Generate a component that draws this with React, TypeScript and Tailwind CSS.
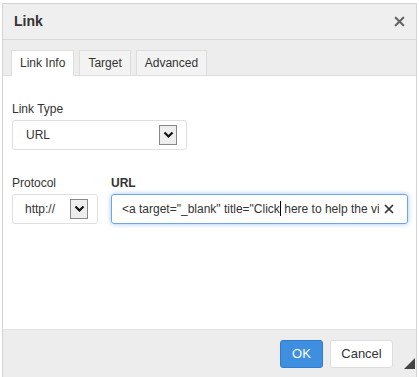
import { X } from 'lucide-react'

function Chevron() {
  return (
    <span className="w-[18px] h-[20px] border border-[#888] bg-[#eee] flex items-center justify-center">
      <svg width="11" height="8" viewBox="0 0 11 8">
        <path d="M1.5 1.5 L5.5 5.5 L9.5 1.5" fill="none" stroke="#111" strokeWidth="2.2" />
      </svg>
    </span>
  )
}

export default function App() {
  return (
    <div className="w-[419px] h-[377px] bg-white overflow-hidden" style={{ fontFamily: '"Liberation Sans", Arial, sans-serif' }}>
      <div className="ml-[2px] mt-[3px] w-[415px] h-[380px] border border-[#d4d4d4] flex flex-col text-[12px] text-[#333]">
        {/* Title */}
        <div className="h-[36px] bg-[#efefef] border-b border-[#d8d8d8] flex items-center justify-between pl-[11px] pr-[9px]">
          <span className="font-bold text-[14px] text-[#333]">Link</span>
          <X size={15} strokeWidth={3.5} className="text-[#666]" />
        </div>

        {/* Tabs */}
        <div className="bg-[#ededed] pt-[10px] pl-[8px] flex gap-[5px] border-b border-[#ddd]">
          <div className="h-[26px] px-[8px] -mb-px bg-white border border-[#ddd] border-b-white flex items-center">Link Info</div>
          <div className="h-[25px] px-[8px] bg-[#f3f3f3] border border-[#ddd] border-b-0 flex items-center">Target</div>
          <div className="h-[25px] px-[8px] bg-[#f3f3f3] border border-[#ddd] border-b-0 flex items-center">Advanced</div>
        </div>

        {/* Content */}
        <div className="bg-white h-[253px] pl-[9px] pr-[8px] pt-[26px]">
          <div className="mb-[3px] leading-[15px]">Link Type</div>
          <div className="w-[175px] h-[30px] border border-[#e0e0e0] rounded-[3px] flex items-center justify-between pl-[13px] pr-[9px]">
            <span>URL</span>
            <Chevron />
          </div>

          <div className="flex gap-[13px] mt-[26px]">
            <div>
              <div className="mb-[3px] leading-[15px]">Protocol</div>
              <div className="w-[86px] h-[30px] border border-[#e0e0e0] rounded-[3px] flex items-center justify-between pl-[12px] pr-[9px]">
                <span>http://</span>
                <Chevron />
              </div>
            </div>
            <div className="flex-1">
              <div className="mb-[3px] leading-[15px] font-bold">URL</div>
              <div className="w-[297px] h-[30px] border border-[#6fa5e6] rounded-[3px] shadow-[0_0_5px_rgba(100,160,230,0.6)] flex items-center justify-between pl-[10px] pr-[11px]">
                <span className="whitespace-nowrap overflow-hidden">
                  &lt;a target="_blank" title="Click<span className="inline-block w-px h-[15px] bg-black align-middle -mt-[2px]"></span> here to help the vi
                </span>
                <X size={14} strokeWidth={3} className="text-[#333] shrink-0 ml-[3px]" />
              </div>
            </div>
          </div>
        </div>

        {/* Footer */}
        <div className="flex-1 bg-[#ededed] border-t border-[#e4e4e4] relative">
          <div className="flex justify-end gap-[7px] pr-[23px] pt-[10px]">
            <button className="h-[28px] w-[43px] rounded-[3px] bg-[#3f8fe0] border border-[#2f7bd0] text-white text-[13px]">OK</button>
            <button className="h-[28px] w-[63px] rounded-[3px] bg-white border border-[#ddd] text-[#333] text-[13px]">Cancel</button>
          </div>
          <svg className="absolute left-[401px] top-[28px]" width="11" height="11" viewBox="0 0 11 11">
            <path d="M11 0 L11 11 L0 11 Z" fill="#444" />
          </svg>
        </div>
      </div>
    </div>
  )
}
